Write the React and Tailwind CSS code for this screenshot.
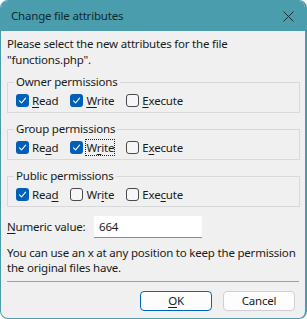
import { useState } from "react";

function Check({ checked }) {
  return checked ? (
    <span className="grid h-[13px] w-[13px] shrink-0 place-items-center rounded-[3px] bg-[#005fb8]">
      <svg width="9" height="9" viewBox="0 0 9 9" fill="none">
        <path d="M1.5 4.8 L3.6 6.8 L7.6 2.2" stroke="white" strokeWidth="1.1" strokeLinecap="round" strokeLinejoin="round" />
      </svg>
    </span>
  ) : (
    <span className="h-[13px] w-[13px] shrink-0 rounded-[3px] border border-[#4a4a4a] bg-[#f6f6f6]" />
  );
}

function Key({ children }) {
  return <span className="underline decoration-1 underline-offset-[2px]">{children}</span>;
}

function Option({ checked, label, focused, className = "" }) {
  return (
    <label className={`flex items-center gap-[3px] ${className}`}>
      <Check checked={checked} />
      <span className={focused ? "outline outline-1 outline-dotted outline-[#222] leading-[15px]" : "leading-[15px]"}>{label}</span>
    </label>
  );
}

function Group({ title, children, className = "" }) {
  return (
    <fieldset className={`border border-[#d9d9d9] px-[8px] pb-[4px] ${className}`}>
      <legend className="-ml-[2px] px-[2px] leading-[16px]">{title}</legend>
      <div className="mt-[2px] flex items-center h-[16px]">{children}</div>
    </fieldset>
  );
}

export default function App() {
  const [value, setValue] = useState("664");

  return (
    <div className="h-[319px] w-[307px] bg-white">
      <div
        className="flex h-[319px] w-[307px] flex-col overflow-hidden rounded-[8px] border border-r-2 border-[#4a9dac] bg-[#f0f0f0] text-[11.5px] tracking-[-0.2px] text-[#1a1a1a]"
        style={{ fontFamily: '"Noto Sans", "Segoe UI", sans-serif' }}
      >
        <div className="flex h-[30px] shrink-0 items-center justify-between bg-[#4a9dac] pl-[10px] pr-[8px] text-[#102a30]">
          <span className="text-[11.5px]">Change file attributes</span>
          <svg width="11" height="11" viewBox="0 0 11 11" className="mr-[3px]">
            <path d="M0.5 0.5 L10.5 10.5 M10.5 0.5 L0.5 10.5" stroke="#1c2f33" strokeWidth="1" />
          </svg>
        </div>

        <div className="flex flex-col pl-[6px] pr-[5px] pt-[5px] whitespace-nowrap">
          <p className="leading-[16px]">
            Please select the new attributes for the file
            <br />
            "functions.php".
          </p>

          <Group title="Owner permissions" className="mt-[6px]">
            <Option checked label={<><Key>R</Key>ead</>} />
            <Option checked label={<><Key>W</Key>rite</>} className="ml-[12px]" />
            <Option label={<><Key>E</Key>xecute</>} className="ml-[12px]" />
          </Group>

          <Group title="Group permissions" className="mt-[8px]">
            <Option checked label={<>Re<Key>a</Key>d</>} />
            <Option checked focused label={<>W<Key>r</Key>ite</>} className="ml-[12px]" />
            <Option label={<>E<Key>x</Key>ecute</>} className="ml-[12px]" />
          </Group>

          <Group title="Public permissions" className="mt-[8px]">
            <Option checked label={<>Rea<Key>d</Key></>} />
            <Option label={<>Wr<Key>i</Key>te</>} className="ml-[12px]" />
            <Option label={<>Exe<Key>c</Key>ute</>} className="ml-[12px]" />
          </Group>

          <div className="mt-[9px] flex items-center">
            <span className="w-[87px]"><Key>N</Key>umeric value:</span>
            <input
              value={value}
              onChange={(e) => setValue(e.target.value)}
              className="h-[22px] w-[108px] border-b border-[#8a8a8a] bg-white px-[5px] text-[11.5px] outline-none"
            />
          </div>

          <p className="mt-[7px] leading-[15px]">
            You can use an x at any position to keep the permission
            <br />
            the original files have.
          </p>

          <div className="mt-[6px] h-px w-[292px] bg-[#a0a0a0]" />

          <div className="mt-[9px] flex justify-end gap-[11px] pr-[5px]">
            <button className="h-[20px] w-[72px] rounded-[4px] border border-[#0067c0] bg-[#fdfdfd] leading-[16px]">
              <Key>O</Key>K
            </button>
            <button className="h-[20px] w-[72px] rounded-[4px] border border-[#d0d0d0] bg-[#fdfdfd] leading-[16px]">
              Cancel
            </button>
          </div>
        </div>
      </div>
    </div>
  );
}
